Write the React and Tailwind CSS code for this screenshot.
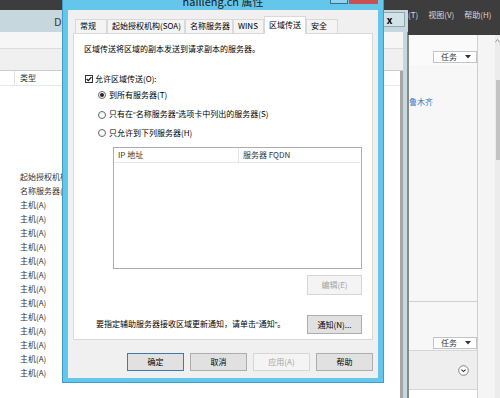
import React from 'react';

const rows = [
  '起始授权机构(SOA)',
  '名称服务器(NS)',
  ...Array(13).fill('主机(A)'),
];

const tabs = [
  { label: '常规', w: 'w-[32px]' },
  { label: '起始授权机构(SOA)', w: 'w-[78px]' },
  { label: '名称服务器', w: 'w-[48px]' },
  { label: 'WINS', w: 'w-[31px]' },
  { label: '区域传送', w: 'w-[42px]', active: true },
  { label: '安全', w: 'w-[32px]' },
];

// narrow Latin quotes, as the Windows font draws them
const Q = ({ children }) => <span className="[font-family:'Liberation_Sans',sans-serif]">{children}</span>;

const Check = () => (
  <span className="flex items-center justify-center w-[8px] h-[8px] border border-[#333] bg-white shrink-0">
    <svg width="6" height="6" viewBox="0 0 6 6">
      <path d="M0.6 3 L2.3 4.7 L5.4 1.1" fill="none" stroke="#111" strokeWidth="1.2" />
    </svg>
  </span>
);

const Radio = ({ on }) => (
  <span className="flex items-center justify-center w-[8px] h-[8px] rounded-full border border-[#666] bg-white shrink-0">
    {on && <span className="w-[4px] h-[4px] rounded-full bg-[#222]" />}
  </span>
);

const TaskBtn = () => (
  <div className="flex items-center justify-between w-[44px] h-[12px] pl-[7px] pr-[5px] border border-[#c4c4c4] bg-white text-[#333] leading-[10px]">
    <span>任务</span>
    <svg width="6" height="4" viewBox="0 0 6 4">
      <path d="M0 0 H6 L3 3.5 Z" fill="#333" />
    </svg>
  </div>
);

const Btn = ({ children, def, off, w = 'w-[57px]', h = 'h-[18px]' }) => (
  <div
    className={
      off
        ? `${w} ${h} flex items-center justify-center border border-[#d6d6d6] bg-[#f4f4f4] text-[#a3a3a3]`
        : def
        ? `${w} ${h} flex items-center justify-center border border-[#3d7bad] bg-[#e1e1e1] text-black`
        : `${w} ${h} flex items-center justify-center border border-[#adadad] bg-[#e1e1e1] text-black`
    }
  >
    {children}
  </div>
);

export default function App() {
  return (
    <div className="relative flex w-[500px] h-[398px] overflow-hidden bg-white text-[8px] leading-[12px] text-black [font-family:'Noto_Sans_CJK_SC','Noto_Sans',sans-serif]">
      {/* DNS 管理器 window */}
      <div className="flex flex-col w-[408px] shrink-0">
        <div className="h-[10px] bg-[#3d3d3d]" />
        <div className="relative h-[22px] bg-[#c6d8de] text-[11px] leading-[22px] text-[#3a3a3a]">
          <div className="w-[62px] pl-[54px] overflow-hidden whitespace-nowrap">DNS 管理器</div>
          <div className="absolute right-[3px] top-[2px] flex items-center justify-center w-[31px] h-[15px] border border-[#8fa8b0] bg-[#d3e2e6] text-[10px] font-bold text-black">
            x
          </div>
        </div>
        <div className="flex flex-1">
          <div className="flex flex-col flex-1">
            <div className="h-[17px] bg-[#f6f6f6] border-b border-[#dcdcdc]" />
            <div className="h-[22px] bg-[#f0f0f0] border-b border-[#cccccc]" />
            <div className="flex flex-1">
              <div className="flex flex-col flex-1">
                <div className="flex h-[15px] border-b border-[#e6e6e6]">
                  <div className="w-[15px] border-r border-[#e0e0e0]" />
                  <div className="pl-[5px] leading-[14px] text-[#333]">类型</div>
                </div>
                <div className="pt-[84px] pl-[20px] leading-[14px] text-[#333]">
                  {rows.map((r, i) => (
                    <div key={i} className="whitespace-nowrap">{r}</div>
                  ))}
                </div>
              </div>
              <div className="w-[3px] bg-[#a6a6a6]" />
            </div>
          </div>
          <div className="w-[5px] bg-[#c6d8de] border-r border-[#7f8c90]" />
        </div>
      </div>

      {/* window further back */}
      <div className="flex flex-col flex-1">
        <div className="flex gap-[10px] h-[35px] pt-[9px] bg-[#3d3d3d] text-[#d8d8d8] whitespace-nowrap">
          <span>(T)</span>
          <span>视图(V)</span>
          <span>帮助(H)</span>
        </div>
        <div className="flex flex-1 border-l border-[#888]">
          <div className="flex flex-col w-[69px] border-r border-[#cfcfcf]">
            <div className="flex items-end justify-end h-[30px] pb-[2px] bg-[#fafafa]">
              <TaskBtn />
            </div>
            <div className="h-[237px] pt-[31px] bg-[#f7f7f7] border-b border-[#cfcfcf] text-[#2f78c4] whitespace-nowrap">
              鲁木齐
            </div>
            <div className="flex items-end justify-end h-[48px] pb-[1px] bg-[#f7f7f7]">
              <TaskBtn />
            </div>
            <div className="flex items-center justify-end h-[40px] pr-[8px] bg-[#eeeeee] border-y border-[#d6d6d6]">
              <svg width="11" height="11" viewBox="0 0 11 11">
                <circle cx="5.5" cy="5.5" r="4.8" fill="#fff" stroke="#777" strokeWidth="0.9" />
                <path d="M3.4 4.6 L5.5 6.6 L7.6 4.6" fill="none" stroke="#333" strokeWidth="1.1" />
              </svg>
            </div>
            <div className="flex-1 bg-white" />
          </div>
          <div className="w-[17px] bg-[#f5f5f5]" />
          <div className="flex flex-col items-center w-[5px] bg-[#ececec]">
            <svg className="mt-[4px]" width="5" height="4" viewBox="0 0 5 4">
              <path d="M0 3.5 L2.5 0.5 L5 3.5" fill="none" stroke="#888" strokeWidth="0.8" />
            </svg>
            <div className="mt-[37px] w-[4px] h-[80px] bg-[#c3c3c3]" />
          </div>
        </div>
      </div>

      {/* hailleng.cn 属性 dialog */}
      <div className="absolute left-[62px] top-[-10px] flex flex-col w-[322px] h-[393px] border border-[#3f9dc8] bg-[#65c6ec]">
        <div className="relative flex items-center justify-center h-[19px] text-[11px] text-[#1a1a1a]">
          hailleng.cn 属性
          <div className="absolute right-[5px] top-0 flex gap-[1px]">
            <div className="w-[18px] h-[13px] border border-[#3c6f88] bg-[#8fd3ef]" />
            <div className="w-[29px] h-[13px] bg-[#c75050]" />
          </div>
        </div>
        <div className="flex flex-col flex-1 mx-[5px] mb-[4px] bg-[#f0f0f0]">
          <div className="flex items-end h-[23px] pl-[7px]">
            {tabs.map((t) =>
              t.active ? (
                <div
                  key={t.label}
                  className={`${t.w} relative z-10 h-[18px] -mb-[1px] pl-[4px] pt-[2px] border-x border-t border-[#d9d9d9] bg-white whitespace-nowrap`}
                >
                  {t.label}
                </div>
              ) : (
                <div
                  key={t.label}
                  className={`${t.w} h-[14px] pl-[4px] leading-[12px] border-x border-t border-[#d9d9d9] bg-[#f4f4f4] whitespace-nowrap overflow-hidden`}
                >
                  {t.label}
                </div>
              )
            )}
          </div>

          <div className="flex flex-col h-[307px] mx-[5px] border border-[#d9d9d9] bg-white">
            <div className="mt-[9px] pl-[10px]">区域传送将区域的副本发送到请求副本的服务器。</div>
            <div className="flex items-center gap-[2px] mt-[18px] pl-[11px]">
              <Check />
              <span>允许区域传送(O):</span>
            </div>
            <div className="flex items-center gap-[3px] mt-[4px] pl-[24px]">
              <Radio on />
              <span>到所有服务器(T)</span>
            </div>
            <div className="flex items-center gap-[3px] mt-[7px] pl-[24px]">
              <Radio />
              <span>
                只有在<Q>“</Q>名称服务器<Q>”</Q>选项卡中列出的服务器(S)
              </span>
            </div>
            <div className="flex items-center gap-[3px] mt-[6px] pl-[24px]">
              <Radio />
              <span>只允许到下列服务器(H)</span>
            </div>

            <div className="flex flex-col h-[122px] mt-[8px] ml-[39px] mr-[10px] border border-[#adadad] bg-white">
              <div className="flex h-[15px] mr-[1px] border-b border-[#e5e5e5] leading-[14px]">
                <div className="w-[125px] pl-[4px] border-r border-[#e5e5e5] text-[#333]">IP 地址</div>
                <div className="pl-[4px] text-[#333]">服务器 FQDN</div>
              </div>
            </div>

            <div className="flex justify-end mt-[6px] pr-[10px]">
              <Btn off w="w-[55px]" h="h-[20px]">编辑(E)</Btn>
            </div>

            <div className="flex items-center justify-between mt-[20px] pl-[22px] pr-[10px]">
              <span>
                要指定辅助服务器接收区域更新通知，请单击<Q>“</Q>通知<Q>”</Q>。
              </span>
              <Btn w="w-[55px]" h="h-[19px]">通知(N)...</Btn>
            </div>
          </div>

          <div className="flex justify-end gap-[6px] mt-[13px] pr-[5px]">
            <Btn def>确定</Btn>
            <Btn>取消</Btn>
            <Btn off>应用(A)</Btn>
            <Btn>帮助</Btn>
          </div>
        </div>
      </div>
    </div>
  );
}
